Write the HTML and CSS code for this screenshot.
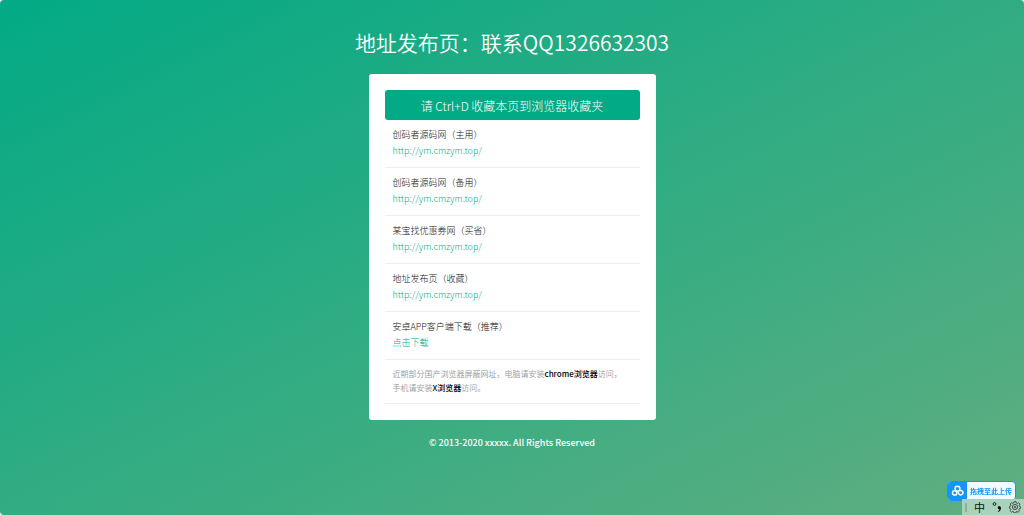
FILE: index.html
```html
<!DOCTYPE html>
<html lang="zh-CN">
<head>
    <meta charset="UTF-8">
    <meta name="viewport" content="width=device-width, initial-scale=1.0">
    <title>地址发布页</title>
    <link rel="stylesheet" href="styles.css">
</head>
<body>
    <div class="page">
        <h1>地址发布页：联系QQ1326632303</h1>

        <main class="card">
            <button class="fav-btn" type="button">请 Ctrl+D 收藏本页到浏览器收藏夹</button>
            <ul class="links">
                <li><p>创码者源码网（主用）</p><a href="http://ym.cmzym.top/">http://ym.cmzym.top/</a></li>
                <li><p>创码者源码网（备用）</p><a href="http://ym.cmzym.top/">http://ym.cmzym.top/</a></li>
                <li><p>某宝找优惠券网（买省）</p><a href="http://ym.cmzym.top/">http://ym.cmzym.top/</a></li>
                <li><p>地址发布页（收藏）</p><a href="http://ym.cmzym.top/">http://ym.cmzym.top/</a></li>
                <li><p>安卓APP客户端下载（推荐）</p><a href="#">点击下载</a></li>
                <li class="note">近期部分国产浏览器屏蔽网址，电脑请安装<strong>chrome浏览器</strong>访问，<br>手机请安装<strong>X浏览器</strong>访问。</li>
            </ul>
        </main>

        <footer>© 2013-2020 xxxxx. All Rights Reserved</footer>
    </div>

    <!-- Upload widget -->
    <button class="upload" type="button">
        <span class="upload-icon">
            <svg viewBox="0 0 20 20" width="19" height="20">
                <g fill="none" stroke="#fff" stroke-width="1.5">
                    <circle cx="10" cy="7.6" r="2.6"/>
                    <circle cx="7" cy="12" r="2.3"/>
                    <path d="M10 10.4l1.6 2.8a2.3 2.3 0 1 0 .6-3.4"/>
                </g>
            </svg>
        </span>
        <span class="upload-text">拖拽至此上传</span>
    </button>

    <!-- Input method bar -->
    <div class="ime">
        <span class="grip"></span>
        <span class="lang">中</span>
        <svg viewBox="0 0 10 12" width="10" height="12">
            <circle cx="2.5" cy="3" r="1.4" fill="none" stroke="#222"/>
            <path d="M7.2 5a1.6 1.6 0 1 0 .2 3.2q-.2 1.3-1.6 2.1l.4.7q3-1.3 2.8-4.2Q8.8 5.1 7.2 5z" fill="#111"/>
        </svg>
        <svg viewBox="0 0 12 12" width="12" height="12">
            <g fill="none" stroke="#333" stroke-width=".8">
                <path d="M5 .7h2l.3 1.4 1 .4 1.2-.8 1.4 1.4-.8 1.2.4 1 .9.2v2l-1.2.3-.4 1 .7 1.1-1.4 1.4-1.1-.8-1 .4-.3 1.1H5l-.3-1.2-1-.4-1.2.8-1.4-1.4.8-1.2-.4-1L.5 7.4v-2l1.1-.2.4-1-.8-1.2 1.4-1.4 1.2.8 1-.4z"/>
                <circle cx="6" cy="6" r="2.6"/>
                <circle cx="6" cy="6" r=".8"/>
            </g>
        </svg>
    </div>
</body>
</html>
```
FILE: styles.css
```css
html {
    min-height: 100%;
    background: #fff;
}

body {
    margin: 0;
    min-height: 100vh;
    border-radius: 4px;
    background: linear-gradient(to bottom right, #02aa85, #60ae80);
    font-family: "Noto Sans CJK SC", sans-serif;
    font-weight: 300;
}

.page {
    display: flex;
    flex-direction: column;
    align-items: center;
    padding-top: 26px;
}

h1 {
    margin: 0 0 16px;
    color: #fff;
    font-size: 21px;
    font-weight: 350;
    line-height: 32px;
}

.card {
    box-sizing: border-box;
    width: 28%;
    min-width: 287px;
    padding: 16px;
    background: #fff;
    border-radius: 3px;
}

.fav-btn {
    display: block;
    width: 100%;
    height: 30px;
    padding: 0;
    border: none;
    border-radius: 3px;
    background: #02aa85;
    color: #fff;
    font-family: inherit;
    font-size: 12px;
    font-weight: 300;
    cursor: pointer;
}

.links {
    margin: 0;
    padding: 0;
    list-style: none;
    font-size: 9px;
    line-height: 16px;
}

.links li {
    padding: 7px 8px 8px;
    border-bottom: 1px solid #eee;
    color: #111;
}

.links p {
    margin: 0;
}

.links a {
    display: block;
    color: #02aa85;
    text-decoration: none;
}

.links .note {
    color: #999;
    font-size: 8px;
    font-weight: 350;
    line-height: 14px;
}

.note strong {
    color: #000;
    font-weight: 500;
}

footer {
    margin-top: 16px;
    color: #fff;
    font-size: 9px;
    font-weight: 500;
    line-height: 14px;
}

.upload {
    position: fixed;
    right: 8px;
    bottom: 14px;
    display: flex;
    height: 20px;
    padding: 0;
    overflow: hidden;
    border: 1px solid #1296fa;
    border-radius: 4px;
    box-sizing: border-box;
    background: #f2faff;
    align-items: center;
    cursor: pointer;
}

.upload-icon {
    display: flex;
    background: #1296fa;
}

.upload-text {
    padding: 0 3px;
    color: #1296fa;
    font-family: "Noto Sans CJK SC", sans-serif;
    font-size: 7px;
    font-weight: 700;
}

.ime {
    position: fixed;
    right: 0;
    bottom: 0;
    display: flex;
    align-items: center;
    gap: 7px;
    box-sizing: border-box;
    height: 16px;
    padding: 0 3px;
    background: #a9d2bb;
    color: #111;
}

.grip {
    width: 2px;
    height: 9px;
    background: #8fae9e;
}

.lang {
    font-size: 11px;
    font-weight: 400;
    line-height: 16px;
}
```
